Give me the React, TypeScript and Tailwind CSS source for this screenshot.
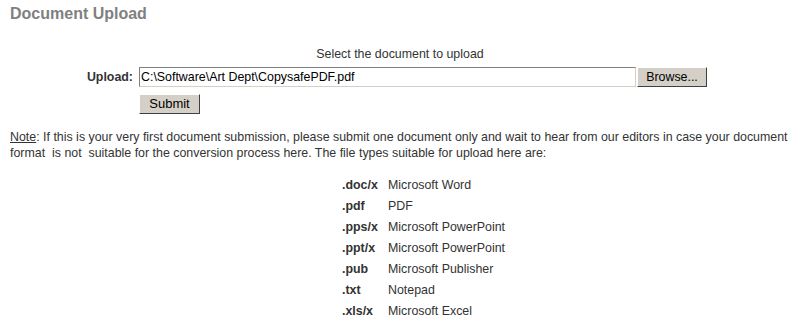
import React from "react";

const types = [
  { ext: ".doc/x", name: "Microsoft Word" },
  { ext: ".pdf", name: "PDF" },
  { ext: ".pps/x", name: "Microsoft PowerPoint" },
  { ext: ".ppt/x", name: "Microsoft PowerPoint" },
  { ext: ".pub", name: "Microsoft Publisher" },
  { ext: ".txt", name: "Notepad" },
  { ext: ".xls/x", name: "Microsoft Excel" },
];

export default function App() {
  return (
    <div className="w-[800px] h-[323px] bg-white font-['Liberation_Sans',Arial,sans-serif] text-[12.4px] text-[#333333] overflow-hidden">
      <h1 className="pl-[10px] pt-[4px] text-[16px] font-bold leading-[20px] text-[#808080]">Document Upload</h1>

      {/* upload form */}
      <div className="mt-[23px] text-center leading-[14px]">Select the document to upload</div>
      <div className="mt-[6px] flex items-center">
        <label className="w-[133px] text-right font-bold">Upload:</label>
        <div className="ml-[6px] w-[497px] h-[20px] bg-white border border-t-[#808080] border-l-[#808080] border-b-[#d4d0c8] border-r-[#d4d0c8] flex items-center px-[1px] leading-[14px] text-black">
          C:\Software\Art Dept\CopysafePDF.pdf
        </div>
        <button className="ml-[1px] w-[70px] h-[20px] bg-[#d4d0c8] border border-t-white border-l-white border-b-[#404040] border-r-[#404040] text-black leading-[14px]">
          Browse...
        </button>
      </div>
      <div className="mt-[7px] pl-[139px]">
        <button className="w-[61px] h-[20px] bg-[#d4d0c8] border border-t-white border-l-white border-b-[#404040] border-r-[#404040] text-black text-[13px] leading-[14px]">
          Submit
        </button>
      </div>

      {/* note */}
      <p className="mt-[15px] px-[10px] leading-[16px]">
        <span className="underline">Note</span>: If this is your very first document submission, please submit one document only and wait to hear from our editors in case your document format&nbsp; is not&nbsp; suitable for the conversion process here. The file types suitable for upload here are:
      </p>

      <table className="mt-[14px] ml-[339px] border-separate border-spacing-0">
        <tbody>
          {types.map((t) => (
            <tr key={t.ext} className="h-[21px]">
              <td className="w-[49px] pl-[3px] font-bold align-middle">{t.ext}</td>
              <td className="align-middle">{t.name}</td>
            </tr>
          ))}
        </tbody>
      </table>
    </div>
  );
}
